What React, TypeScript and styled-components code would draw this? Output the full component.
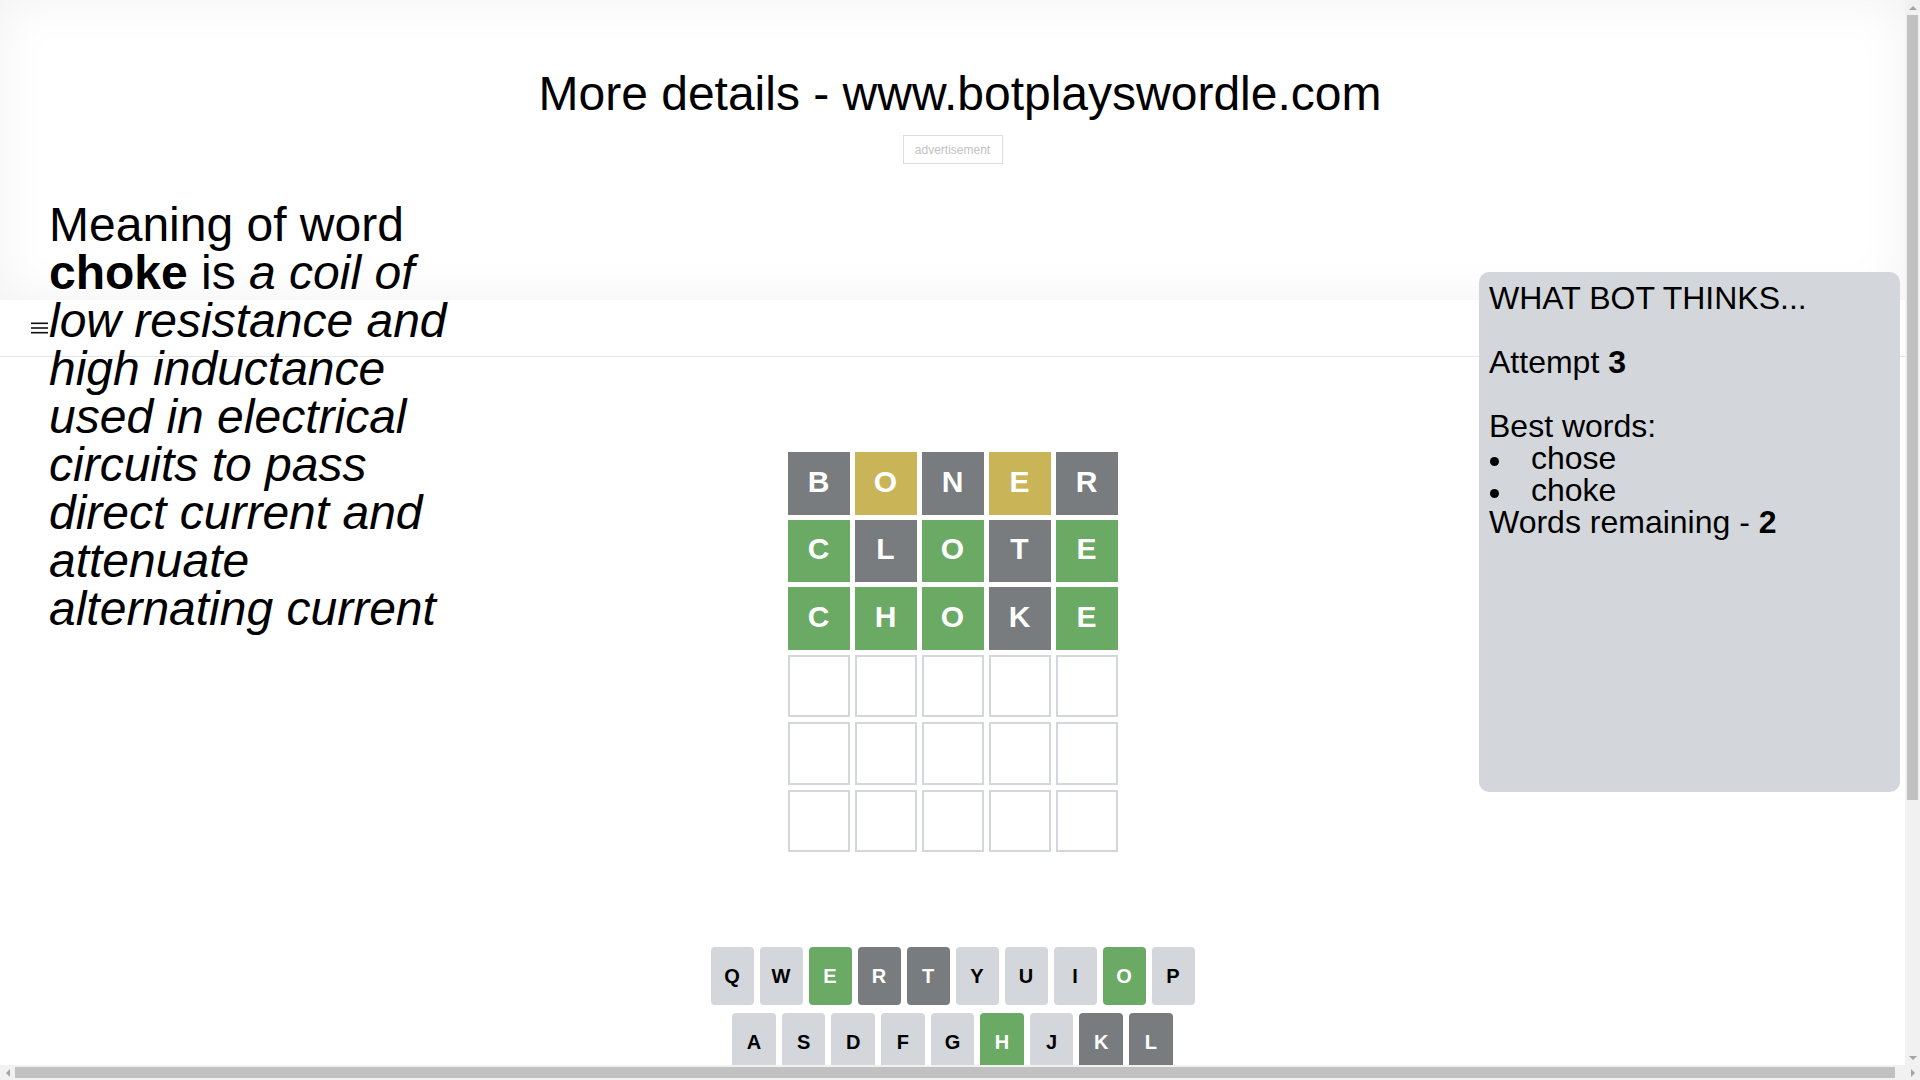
import React from "react";
import styled, { createGlobalStyle } from "styled-components";

const GlobalStyle = createGlobalStyle`
  html, body {
    margin: 0;
    padding: 0;
    background: #ffffff;
    font-family: "Liberation Sans", Arial, sans-serif;
    color: #000000;
    overflow: hidden;
  }
  * { box-sizing: border-box; }
`;

/* Window frame with classic scrollbars */
const Viewport = styled.div`
  width: 1920px;
  height: 1080px;
  display: grid;
  grid-template-columns: 1fr 15px;
  grid-template-rows: 1fr 15px;
  overflow: hidden;
`;

const ContentArea = styled.div`
  grid-column: 1;
  grid-row: 1;
  overflow: hidden;
  position: relative;
`;

const VScroll = styled.div`
  grid-column: 2;
  grid-row: 1;
  background: #f1f1f1;
  display: flex;
  flex-direction: column;
`;

const HScroll = styled.div`
  grid-column: 1 / span 2;
  grid-row: 2;
  background: #f1f1f1;
  display: flex;
`;

const ArrowCell = styled.div`
  width: 15px;
  height: 15px;
  flex: none;
  display: flex;
  align-items: center;
  justify-content: center;
`;

const VTrack = styled.div`
  flex: 1;
  display: flex;
  flex-direction: column;
`;

const VThumb = styled.div`
  height: 785px;
  margin: 0 2px;
  background: #c1c1c1;
`;

const HTrack = styled.div`
  flex: 1;
  display: flex;
  align-items: center;
`;

const HThumb = styled.div`
  width: 1880px;
  height: 11px;
  background: #c1c1c1;
`;

const Arrow = ({ dir }: { dir: "up" | "down" | "left" | "right" }) => {
  const pts: Record<string, string> = {
    up: "0,4 4,0 8,4",
    down: "0,0 8,0 4,4",
    left: "4,0 4,8 0,4",
    right: "0,0 0,8 4,4",
  };
  const vertical = dir === "up" || dir === "down";
  return (
    <svg width={vertical ? 8 : 4} height={vertical ? 4 : 8} viewBox={vertical ? "0 0 8 4" : "0 0 4 8"}>
      <polygon points={pts[dir]} fill="#a3a3a3" />
    </svg>
  );
};

const Page = styled.div`
  position: relative;
  width: 100%;
`;

const TopAd = styled.section`
  height: 300px;
  padding-top: 66px;
  box-shadow: inset 0 0 50px rgba(0, 0, 0, 0.055);
`;

const Title = styled.div`
  width: 1920px;
  text-align: center;
  font-size: 48px;
  line-height: normal;
`;

const AdSlot = styled.div`
  width: 100px;
  height: 29px;
  margin: 14px auto 0;
  border: 1px solid #dcdcdc;
  color: #c2c2c2;
  font-size: 12px;
  display: flex;
  align-items: center;
  justify-content: center;
`;

const Game = styled.main`
  display: flex;
  flex-direction: column;
`;

const Header = styled.header`
  height: 57px;
  border-bottom: 1px solid #e4e5e7;
  display: flex;
  align-items: center;
  padding-left: 31px;
`;

const MenuIcon = styled.svg`
  width: 17px;
  height: 12px;
  display: block;
`;

const BoardArea = styled.div`
  height: 590px;
  display: flex;
  align-items: center;
  justify-content: center;
`;

const Board = styled.div`
  width: 350px;
  height: 420px;
  padding: 10px;
  display: grid;
  grid-template-rows: repeat(6, 1fr);
  gap: 5px;
`;

const BoardRow = styled.div`
  display: grid;
  grid-template-columns: repeat(5, 1fr);
  gap: 5px;
`;

type TileState = "absent" | "present" | "correct" | "empty";

const tileColor: Record<TileState, string> = {
  absent: "#787c7e",
  present: "#c9b458",
  correct: "#6aaa64",
  empty: "#ffffff",
};

const Tile = styled.div<{ $state: TileState }>`
  background: ${(p) => tileColor[p.$state]};
  border: 2px solid ${(p) => (p.$state === "empty" ? "#d3d6da" : tileColor[p.$state])};
  color: #ffffff;
  font-family: "Liberation Sans", Arial, sans-serif;
  font-weight: bold;
  font-size: 30px;
  line-height: 30px;
  padding-bottom: 3px;
  text-transform: uppercase;
  display: flex;
  align-items: center;
  justify-content: center;
`;

const Keyboard = styled.div`
  width: 500px;
  height: 200px;
  margin: 0 auto;
  padding: 0 8px;
`;

const KeyRow = styled.div`
  display: flex;
  width: 100%;
  margin: 0 auto 8px;
`;

type KeyState = "idle" | "absent" | "correct" | "present";

const keyBg: Record<KeyState, string> = {
  idle: "#d3d6da",
  absent: "#787c7e",
  correct: "#6aaa64",
  present: "#c9b458",
};

const Key = styled.button<{ $state: KeyState; $wide?: boolean }>`
  flex: ${(p) => (p.$wide ? 1.5 : 1)};
  height: 58px;
  margin: 0 6px 0 0;
  padding: 0;
  border: 0;
  border-radius: 4px;
  background: ${(p) => keyBg[p.$state]};
  color: ${(p) => (p.$state === "idle" ? "#000000" : "#ffffff")};
  font-family: "Liberation Sans", Arial, sans-serif;
  font-weight: bold;
  font-size: ${(p) => (p.$wide ? "12px" : "20px")};
  display: flex;
  align-items: center;
  justify-content: center;
  text-transform: uppercase;
  &:last-of-type {
    margin-right: 0;
  }
`;

const HalfSpacer = styled.div`
  flex: 0.5;
`;

const BottomAd = styled.section`
  height: 258px;
`;

const Meaning = styled.div`
  position: absolute;
  left: 49px;
  top: 201px;
  width: 420px;
  font-size: 48px;
  line-height: 48px;
  z-index: 2;
`;

const BotPanel = styled.aside`
  position: absolute;
  left: 1479px;
  top: 272px;
  width: 421px;
  height: 520px;
  padding: 10px;
  border-radius: 10px;
  background: #d3d6da;
  font-size: 32px;
  line-height: 32px;
  z-index: 2;
`;

const PanelLine = styled.div<{ $spaceAfter?: boolean }>`
  margin-bottom: ${(p) => (p.$spaceAfter ? "32px" : "0")};
`;

const WordList = styled.ul`
  margin: 0;
  padding: 0;
  list-style: none;
`;

const WordItem = styled.li`
  &::before {
    content: "";
    display: inline-block;
    width: 9px;
    height: 9px;
    border-radius: 50%;
    background: #000000;
    margin-left: 1px;
    margin-right: 32px;
    vertical-align: 3px;
  }
`;

const guesses: { word: string; states: TileState[] }[] = [
  { word: "boner", states: ["absent", "present", "absent", "present", "absent"] },
  { word: "clote", states: ["correct", "absent", "correct", "absent", "correct"] },
  { word: "choke", states: ["correct", "correct", "correct", "absent", "correct"] },
];

const keyStates: Record<string, KeyState> = {
  e: "correct",
  o: "correct",
  h: "correct",
  c: "correct",
  r: "absent",
  t: "absent",
  k: "absent",
  l: "absent",
  b: "absent",
  n: "absent",
};

const keyState = (k: string): KeyState => keyStates[k] ?? "idle";

export default function App() {
  const rows = Array.from({ length: 6 }, (_, i) => guesses[i]);
  return (
    <>
      <GlobalStyle />
      <Viewport>
        <ContentArea>
          <Page>
            <TopAd>
              <Title>More details - www.botplayswordle.com</Title>
              <AdSlot>advertisement</AdSlot>
            </TopAd>
            <Game>
              <Header>
                <MenuIcon viewBox="0 0 17 12">
                  <rect x="0" y="0.5" width="17" height="1.6" fill="#111" />
                  <rect x="0" y="5.2" width="17" height="1.6" fill="#111" />
                  <rect x="0" y="9.9" width="17" height="1.6" fill="#111" />
                </MenuIcon>
              </Header>
              <BoardArea>
                <Board>
                  {rows.map((g, r) => (
                    <BoardRow key={r}>
                      {Array.from({ length: 5 }, (_, c) => (
                        <Tile key={c} $state={g ? g.states[c] : "empty"}>
                          {g ? g.word[c] : ""}
                        </Tile>
                      ))}
                    </BoardRow>
                  ))}
                </Board>
              </BoardArea>
              <Keyboard>
                <KeyRow>
                  {"qwertyuiop".split("").map((k) => (
                    <Key key={k} $state={keyState(k)}>
                      {k}
                    </Key>
                  ))}
                </KeyRow>
                <KeyRow>
                  <HalfSpacer />
                  {"asdfghjkl".split("").map((k) => (
                    <Key key={k} $state={keyState(k)}>
                      {k}
                    </Key>
                  ))}
                  <HalfSpacer />
                </KeyRow>
                <KeyRow>
                  <Key $state="idle" $wide>
                    enter
                  </Key>
                  {"zxcvbnm".split("").map((k) => (
                    <Key key={k} $state={keyState(k)}>
                      {k}
                    </Key>
                  ))}
                  <Key $state="idle" $wide>
                    ⌫
                  </Key>
                </KeyRow>
              </Keyboard>
            </Game>
            <BottomAd />
            <Meaning>
              Meaning of word <b>choke</b> is{" "}
              <i>
                a coil of low resistance and high inductance used in electrical
                circuits to pass direct current and attenuate alternating current
              </i>
            </Meaning>
            <BotPanel>
              <PanelLine $spaceAfter>WHAT BOT THINKS...</PanelLine>
              <PanelLine $spaceAfter>
                Attempt <b>3</b>
              </PanelLine>
              <PanelLine>Best words:</PanelLine>
              <WordList>
                <WordItem>chose</WordItem>
                <WordItem>choke</WordItem>
              </WordList>
              <PanelLine>
                Words remaining - <b>2</b>
              </PanelLine>
            </BotPanel>
          </Page>
        </ContentArea>
        <VScroll>
          <ArrowCell>
            <Arrow dir="up" />
          </ArrowCell>
          <VTrack>
            <VThumb />
          </VTrack>
          <ArrowCell>
            <Arrow dir="down" />
          </ArrowCell>
        </VScroll>
        <HScroll>
          <ArrowCell>
            <Arrow dir="left" />
          </ArrowCell>
          <HTrack>
            <HThumb />
          </HTrack>
          <ArrowCell>
            <Arrow dir="right" />
          </ArrowCell>
        </HScroll>
      </Viewport>
    </>
  );
}
